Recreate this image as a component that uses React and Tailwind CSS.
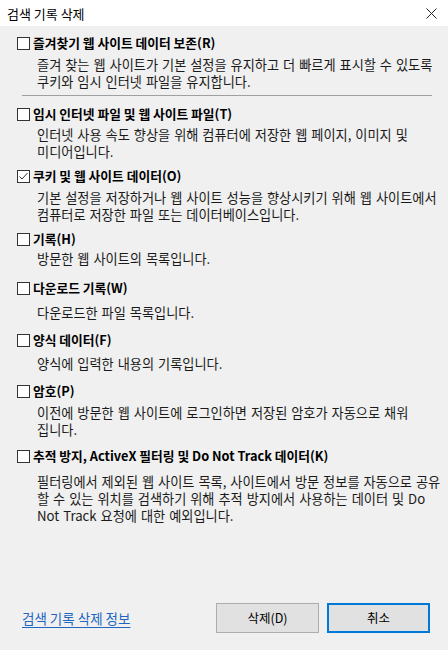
import React, { useState } from 'react';

const items = [
  {
    key: 'favorites',
    label: '즐겨찾기 웹 사이트 데이터 보존(R)',
    desc: ['즐겨 찾는 웹 사이트가 기본 설정을 유지하고 더 빠르게 표시할 수 있도록', '쿠키와 임시 인터넷 파일을 유지합니다.'],
    top: 'mt-[8px]',
    gap: 'mt-[4px]',
  },
  {
    key: 'temp',
    label: '임시 인터넷 파일 및 웹 사이트 파일(T)',
    desc: ['인터넷 사용 속도 향상을 위해 컴퓨터에 저장한 웹 페이지, 이미지 및', '미디어입니다.'],
    top: 'mt-[9px]',
    gap: 'mt-[3px]',
  },
  {
    key: 'cookies',
    label: '쿠키 및 웹 사이트 데이터(O)',
    desc: ['기본 설정을 저장하거나 웹 사이트 성능을 향상시키기 위해 웹 사이트에서', '컴퓨터로 저장한 파일 또는 데이터베이스입니다.'],
    top: 'mt-[7px]',
    gap: 'mt-[4px]',
  },
  {
    key: 'history',
    label: '기록(H)',
    desc: ['방문한 웹 사이트의 목록입니다.'],
    top: 'mt-[7px]',
    gap: 'mt-[2px]',
  },
  {
    key: 'downloads',
    label: '다운로드 기록(W)',
    desc: ['다운로드한 파일 목록입니다.'],
    top: 'mt-[12px]',
    gap: 'mt-[7px]',
  },
  {
    key: 'forms',
    label: '양식 데이터(F)',
    desc: ['양식에 입력한 내용의 기록입니다.'],
    top: 'mt-[10px]',
    gap: 'mt-[6px]',
  },
  {
    key: 'passwords',
    label: '암호(P)',
    desc: ['이전에 방문한 웹 사이트에 로그인하면 저장된 암호가 자동으로 채워', '집니다.'],
    top: 'mt-[10px]',
    gap: 'mt-[4px]',
  },
  {
    key: 'tracking',
    label: '추적 방지, ActiveX 필터링 및 Do Not Track 데이터(K)',
    desc: [
      '필터링에서 제외된 웹 사이트 목록, 사이트에서 방문 정보를 자동으로 공유',
      '할 수 있는 위치를 검색하기 위해 추적 방지에서 사용하는 데이터 및 Do',
      'Not Track 요청에 대한 예외입니다.',
    ],
    top: 'mt-[9px]',
    gap: 'mt-[8px]',
  },
];

const CheckBox = ({ checked }) => (
  <span className="w-[13px] h-[13px] border border-[#333333] bg-white flex items-center justify-center shrink-0">
    {checked && (
      <svg width="11" height="11" viewBox="0 0 11 11">
        <path d="M1.5 5.5 L4 8 L9.5 2" fill="none" stroke="#333333" strokeWidth="1" />
      </svg>
    )}
  </span>
);

export default function App() {
  const [checked, setChecked] = useState({ cookies: true });

  const toggle = (key) => setChecked((prev) => ({ ...prev, [key]: !prev[key] }));

  return (
    <div
      className="w-[448px] h-[650px] flex flex-col bg-[#f0f0f0] text-[13px] text-black"
      style={{ fontFamily: '"Noto Sans CJK KR", "Noto Sans", sans-serif' }}
    >
      {/* 제목 표시줄 */}
      <div className="h-[26px] bg-white flex items-center justify-between pl-[7px] pr-[11px] shrink-0">
        <span className="leading-none">검색 기록 삭제</span>
        <svg width="11" height="11" viewBox="0 0 11 11">
          <path d="M0.5 0.5 L10.5 10.5 M10.5 0.5 L0.5 10.5" stroke="#222222" strokeWidth="1" />
        </svg>
      </div>

      {/* 항목 목록 */}
      <div className="flex flex-col pl-[17px] pr-[14px]">
        {items.map((item, i) => (
          <React.Fragment key={item.key}>
            <div className={item.top}>
              <label className="flex items-center h-[18px] gap-[3px] cursor-default" onClick={() => toggle(item.key)}>
                <CheckBox checked={!!checked[item.key]} />
                <span className="font-bold text-[12.75px] leading-[18px]">{item.label}</span>
              </label>
              <div className={`${item.gap} pl-[20px] text-[13.2px] text-[#1a1a1a] [word-spacing:1px]`}>
                {item.desc.map((line) => (
                  <div key={line} className="leading-[17px] whitespace-nowrap">
                    {line}
                  </div>
                ))}
              </div>
            </div>
            {i === 0 && <div className="mt-[5px] ml-[5px] mr-[2px] h-px bg-[#a0a0a0]" />}
          </React.Fragment>
        ))}
      </div>

      {/* 하단 버튼 */}
      <div className="mt-auto flex items-center justify-between pl-[22px] pr-[18px] pb-[17px]">
        <a className="text-[#1e66c2] text-[13.5px] underline underline-offset-[3px] cursor-pointer">검색 기록 삭제 정보</a>
        <div className="flex gap-[8px]">
          <button className="w-[103px] h-[30px] bg-[#e1e1e1] border border-[#adadad] text-[12.5px]">삭제(D)</button>
          <button className="w-[103px] h-[30px] bg-[#e1e1e1] border-2 border-[#0078d7] text-[12.5px]">취소</button>
        </div>
      </div>
    </div>
  );
}
